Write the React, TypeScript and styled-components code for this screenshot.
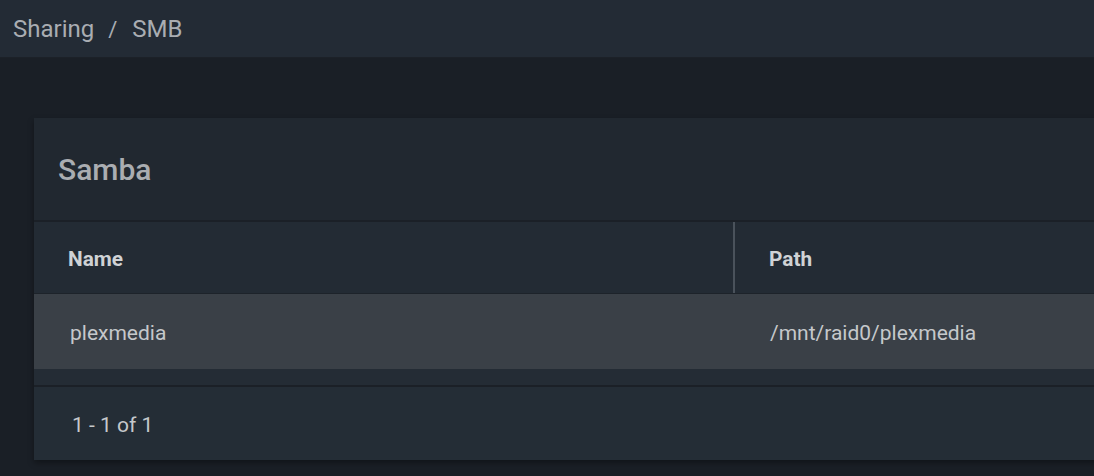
import React from "react";
import styled, { createGlobalStyle } from "styled-components";

const Global = createGlobalStyle`
  html, body { margin: 0; padding: 0; background: #1a1f26; overflow: hidden; }
  body { font-family: Roboto, "Noto Sans", "Liberation Sans", sans-serif; }
  * { box-sizing: border-box; }
`;

const Page = styled.div`
  width: 1094px;
  height: 476px;
  display: flex;
  flex-direction: column;
  background: #1a1f26;
  overflow: hidden;
`;

const TopBar = styled.header`
  height: 58px;
  flex: none;
  display: flex;
  align-items: center;
  padding: 1px 0 0 13px;
  background: #232b35;
  border-bottom: 1px solid #1c2128;
`;

const Crumb = styled.span`
  font-size: 24px;
  color: #a9adb2;
  line-height: 1;
`;

const Sep = styled.span`
  font-size: 22px;
  color: #a9adb2;
  margin: 0 15px 0 14px;
`;

const Content = styled.main`
  padding: 60px 0 0 34px;
`;

const Card = styled.section`
  width: 1400px;
  background: #242c35;
  box-shadow: 0 3px 6px rgba(0, 0, 0, 0.35);
  display: flex;
  flex-direction: column;
`;

const CardHeader = styled.div`
  height: 104px;
  display: flex;
  align-items: center;
  padding: 1px 0 0 24px;
  background: #212830;
  border-bottom: 2px solid #1b2027;
`;

const Title = styled.h1`
  margin: 0;
  font-size: 30px;
  font-weight: 500;
  color: #aaadb1;
`;

const Row = styled.div<{ $variant: "head" | "body" }>`
  display: grid;
  grid-template-columns: 699px 1fr;
  height: ${(p) => (p.$variant === "head" ? "72px" : "75px")};
  background: ${(p) => (p.$variant === "head" ? "#232b34" : "#3a4047")};
  border-bottom: ${(p) => (p.$variant === "head" ? "1px solid #1d232a" : "none")};
`;

const Cell = styled.div<{ $head?: boolean; $divider?: boolean; $inset: number }>`
  display: flex;
  align-items: center;
  padding: 3px 0 0 ${(p) => p.$inset}px;
  font-size: ${(p) => (p.$head ? "20.8px" : "21px")};
  font-weight: ${(p) => (p.$head ? 700 : 400)};
  color: ${(p) => (p.$head ? "#cfd2d5" : "#c5c8cb")};
  border-left: ${(p) => (p.$divider ? "2px solid #4a525b" : "none")};
`;

const Spacer = styled.div`
  height: 18px;
  background: #242c35;
  border-bottom: 2px solid #1b2027;
`;

const Footer = styled.div`
  height: 73px;
  display: flex;
  align-items: center;
  padding: 2px 0 0 38px;
  font-size: 21px;
  color: #c5c8cb;
  background: #242d36;
`;

export default function App() {
  return (
    <>
      <Global />
      <Page>
        <TopBar>
          <Crumb>Sharing</Crumb>
          <Sep>/</Sep>
          <Crumb>SMB</Crumb>
        </TopBar>
        <Content>
          <Card>
            <CardHeader>
              <Title>Samba</Title>
            </CardHeader>
            <Row $variant="head">
              <Cell $head $inset={34}>Name</Cell>
              <Cell $head $divider $inset={34}>Path</Cell>
            </Row>
            <Row $variant="body">
              <Cell $inset={36}>plexmedia</Cell>
              <Cell $inset={37}>/mnt/raid0/plexmedia</Cell>
            </Row>
            <Spacer />
            <Footer>1 - 1 of 1</Footer>
          </Card>
        </Content>
      </Page>
    </>
  );
}
